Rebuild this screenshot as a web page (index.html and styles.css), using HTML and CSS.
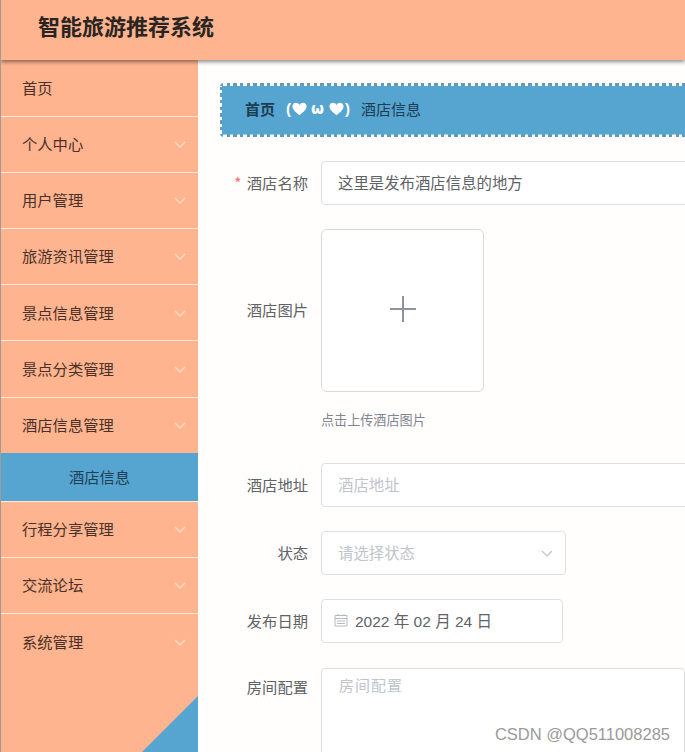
FILE: index.html
```html
<!DOCTYPE html>
<html lang="zh-CN">
<head>
<meta charset="utf-8">
<title>智能旅游推荐系统</title>
<link rel="stylesheet" href="styles.css">
</head>
<body>
<div class="app">
  <header class="topbar"><h1 class="brand">智能旅游推荐系统</h1></header>
  <div class="body-row">
    <aside class="sidebar">
      <nav class="menu">
        <a class="menu-item first">首页</a>
        <a class="menu-item">个人中心<svg class="chev" viewBox="0 0 12 7"><path d="M1 1l5 5 5-5"/></svg></a>
        <a class="menu-item">用户管理<svg class="chev" viewBox="0 0 12 7"><path d="M1 1l5 5 5-5"/></svg></a>
        <a class="menu-item">旅游资讯管理<svg class="chev" viewBox="0 0 12 7"><path d="M1 1l5 5 5-5"/></svg></a>
        <a class="menu-item">景点信息管理<svg class="chev" viewBox="0 0 12 7"><path d="M1 1l5 5 5-5"/></svg></a>
        <a class="menu-item">景点分类管理<svg class="chev" viewBox="0 0 12 7"><path d="M1 1l5 5 5-5"/></svg></a>
        <a class="menu-item open">酒店信息管理<svg class="chev" viewBox="0 0 12 7"><path d="M1 1l5 5 5-5"/></svg></a>
        <a class="submenu-item">酒店信息</a>
        <a class="menu-item">行程分享管理<svg class="chev" viewBox="0 0 12 7"><path d="M1 1l5 5 5-5"/></svg></a>
        <a class="menu-item">交流论坛<svg class="chev" viewBox="0 0 12 7"><path d="M1 1l5 5 5-5"/></svg></a>
        <a class="menu-item last">系统管理<svg class="chev" viewBox="0 0 12 7"><path d="M1 1l5 5 5-5"/></svg></a>
      </nav>
      <div class="corner"></div>
    </aside>
    <main class="content">
      <div class="crumbs">
        <span class="crumb-home">首页</span>
        <span class="crumb-sep">(<svg class="heart" viewBox="0 0 18 16"><path d="M9 15.5C3 11 .5 8 .5 4.8.5 2.3 2.4.5 4.8.5 6.6.5 8.2 1.500 9 3.200 9.800 1.500 11.400.5 13.200.5c2.400 0 4.300 1.800 4.300 4.300C17.500 8 15 11 9 15.500z"/></svg><span class="omega">ω</span><svg class="heart" viewBox="0 0 18 16"><path d="M9 15.5C3 11 .5 8 .5 4.8.5 2.3 2.4.5 4.8.5 6.6.5 8.2 1.500 9 3.200 9.800 1.500 11.400.5 13.200.5c2.400 0 4.300 1.800 4.300 4.300C17.500 8 15 11 9 15.500z"/></svg>)</span>
        <span class="crumb-page">酒店信息</span>
      </div>
      <form class="form">
        <div class="row">
          <label class="label"><span class="req">*</span> 酒店名称</label>
          <div class="field wide value">这里是发布酒店信息的地方</div>
        </div>
        <div class="row upload-row">
          <label class="label">酒店图片</label>
          <div class="upload-wrap">
            <div class="upload">
              <svg class="plus" viewBox="0 0 26 26"><path d="M13 0v26M0 13h26"/></svg>
            </div>
          </div>
        </div>
        <div class="hint">点击上传酒店图片</div>
        <div class="row">
          <label class="label">酒店地址</label>
          <div class="field wide placeholder">酒店地址</div>
        </div>
        <div class="row">
          <label class="label">状态</label>
          <div class="field select placeholder">请选择状态<svg class="select-chev" viewBox="0 0 12 7"><path d="M1 1l5 5 5-5"/></svg></div>
        </div>
        <div class="row date-row">
          <label class="label">发布日期</label>
          <div class="field date">
            <svg class="cal" viewBox="0 0 14 14"><path d="M1 2.500h12v10.500H1zM1 5.500h12M3 8h8M3 10.500h8M4 1v2M10 1v2"/></svg>
            <span>2022 年 02 月 24 日</span>
          </div>
        </div>
        <div class="row textarea-row">
          <label class="label">房间配置</label>
          <div class="textarea">房间配置</div>
        </div>
      </form>
    </main>
  </div>
  <div class="watermark">CSDN @QQ511008285</div>
</div>
</body>
</html>
```
FILE: styles.css
```css
* { box-sizing: border-box; }
html, body { margin: 0; height: 100%; overflow: hidden; background: #fff; }
body { font-family: "Noto Sans CJK SC", "Liberation Sans", sans-serif; color: #606266; }
.app { position: relative; width: 685px; height: 752px; overflow: hidden; border-left: 1px solid #a39a94; }
.topbar { position: relative; z-index: 2; height: 60px; background: #feb48e; box-shadow: 0 2px 4px rgba(0,0,0,.45); display: flex; align-items: center; padding-left: 37px; }
.brand { margin: 0; font-size: 22px; font-weight: 700; line-height: 1; color: #2a2422; position: relative; top: -5px; }
.body-row { display: flex; height: 692px; }
.sidebar { position: relative; flex: 0 0 197px; background: #feb48e; overflow: hidden; }
.menu { display: flex; flex-direction: column; }
.menu-item { height: 56.2px; display: flex; align-items: center; justify-content: space-between; padding: 0 12px 2.5px 21px; font-size: 15.3px; color: #4a3028; border-bottom: 1px solid #ffe9dd; }
.menu-item.first { height: 56.6px; padding-bottom: 1px; }
.menu-item.open { height: 55.6px; border-bottom: 0; }
.menu-item.last { border-bottom: 0; }
.chev { width: 12px; height: 7px; margin-top: 3px; fill: none; stroke: #ffdcc8; stroke-width: 1.3; }
.submenu-item { height: 48.6px; display: flex; align-items: center; justify-content: center; padding-bottom: 2px; font-size: 15.3px; color: #1f3f55; background: #56a4d0; border-bottom: 1px solid #ffe9dd; }
.corner { position: absolute; right: 0; bottom: 0; width: 56px; height: 56px; background: #56a4d0; clip-path: polygon(100% 0, 100% 100%, 0 100%); }
.content { flex: 1; min-width: 0; padding: 23px 0 0 22px; overflow: hidden; background: #fffefd; }
.crumbs { width: 600px; height: 54px; display: flex; align-items: center; padding: 0 0 3px 25px; border-radius: 4px; font-size: 15px; color: #1d3d52;
  background:
    linear-gradient(#56a4d0, #56a4d0) 2px 2.5px / calc(100% - 4px) calc(100% - 5.5px) no-repeat,
    repeating-linear-gradient(90deg, #5d9cbf 0 3.4px, transparent 3.4px 6.7px) 0 0 / 100% 3px no-repeat,
    repeating-linear-gradient(90deg, #5d9cbf 0 3.4px, transparent 3.4px 6.7px) 0 100% / 100% 3px no-repeat,
    repeating-linear-gradient(0deg, #5d9cbf 0 3.4px, transparent 3.4px 6.7px) 0 0 / 3px 100% no-repeat;
}
.crumb-home { font-weight: 700; }
.crumb-sep { display: inline-flex; align-items: center; margin: 0 11px; font-family: "Liberation Sans", sans-serif; font-weight: 700; color: #fff; font-size: 15px; }
.heart { width: 15px; height: 14px; fill: #fff; margin: 0 1px 0 0.5px; }
.omega { width: 13px; margin: 0 4.5px 0 3.5px; font-family: "DejaVu Sans", sans-serif; font-size: 15px; text-align: center; }
.form { padding-top: 24px; }
.row { display: flex; align-items: center; margin-bottom: 24px; font-size: 15.3px; }
.label { flex: 0 0 88px; text-align: right; color: #606266; font-size: 15.3px; white-space: nowrap; position: relative; top: -1px; }
.upload-row .label { top: -2px; }
.req { color: #f56c6c; margin-right: 2px; }
.field { margin-left: 13px; height: 44px; display: flex; align-items: center; flex: none; padding: 0 16px 2px; border: 1px solid #dedfe2; border-radius: 4px; background: #fff; font-size: 15.4px; }
.wide { width: 500px; }
.value { color: #606266; }
.placeholder { color: #c0c4cc; }
.upload-row { margin-bottom: 0; }
.upload-wrap { margin-left: 13px; }
.upload { width: 163px; height: 163px; border: 1px solid #d9d9d9; border-radius: 6px; display: flex; align-items: center; justify-content: center; background: #fff; padding-bottom: 3px; }
.plus { width: 26px; height: 26px; fill: none; stroke: #8c939d; stroke-width: 2; }
.hint { margin: 18px 0 33px 101px; font-size: 13.1px; line-height: 20px; color: #7f868f; }
.select { width: 245px; justify-content: space-between; padding-right: 12px; }
.select-chev { width: 12px; height: 7px; margin-top: 2px; fill: none; stroke: #c0c4cc; stroke-width: 1.2; }
.date { width: 242px; gap: 7px; padding: 0 12px 2px; color: #606266; font-family: "Liberation Sans", "Noto Sans CJK SC", sans-serif; font-size: 15.5px; }
.cal { width: 14px; height: 14px; fill: none; stroke: #b4b8bf; stroke-width: 1; }
.date-row { margin-bottom: 25px; }
.textarea-row { align-items: flex-start; margin-bottom: 0; }
.textarea-row .label { padding-top: 8px; }
.textarea { margin-left: 13px; width: 500px; height: 200px; border: 1px solid #dedfe2; border-radius: 4px; padding: 5px 17px; font-size: 15px; color: #c0c4cc; background: #fff; letter-spacing: 1px; }
.watermark { position: absolute; right: 15px; bottom: 8px; font-family: "Liberation Sans", sans-serif; font-size: 16.5px; color: #9a9a9a; line-height: 20px; }
```
